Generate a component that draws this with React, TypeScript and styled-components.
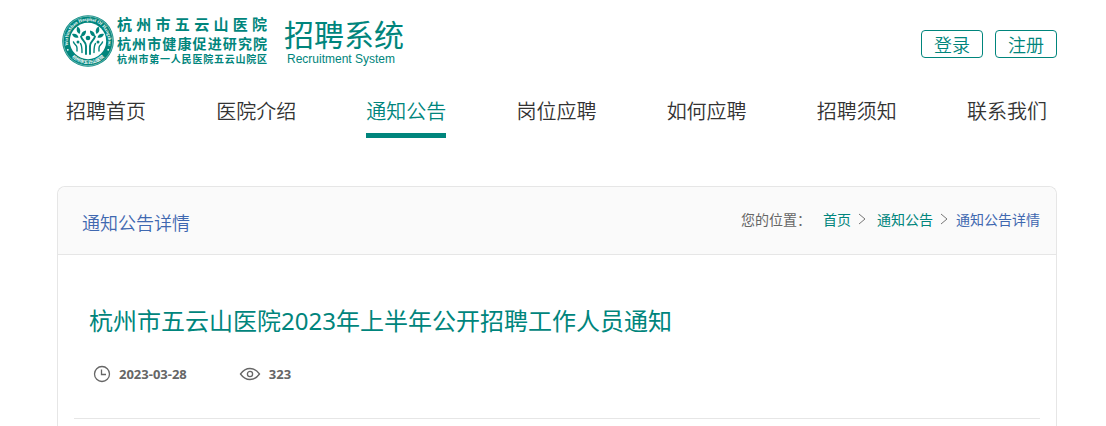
import React from 'react';
import styled, { createGlobalStyle } from 'styled-components';

const teal = '#00857c';
const line = '#e6e6e6';

const GlobalStyle = createGlobalStyle`
  * { box-sizing: border-box; }
  body {
    margin: 0;
    background: #fff;
    color: #333;
    font-family: "Noto Sans CJK SC", sans-serif;
  }
  a { color: inherit; text-decoration: none; }
`;

const Page = styled.div`
  padding: 11px 49px 0 57px;
`;

const Header = styled.header`
  display: flex;
  align-items: center;
  height: 60px;
`;

const Brand = styled.a`
  display: flex;
  align-items: center;
  padding-left: 4px;
  color: ${teal};
`;

const Emblem = styled.svg`
  width: 54px;
  height: 54px;
  margin-right: 2px;
`;

const Names = styled.span`
  display: flex;
  flex-direction: column;
  width: 150px;
  padding-bottom: 2px;
  font-weight: 700;
`;

const Name = styled.span<{ $size: number; $height: number }>`
  font-size: ${(p) => p.$size}px;
  line-height: ${(p) => p.$height}px;
  white-space: nowrap;
  text-align: justify;
  text-align-last: justify;
`;

const System = styled.span`
  display: flex;
  flex-direction: column;
  margin-left: 17px;
`;

const SystemName = styled.span`
  font-size: 30px;
  line-height: 36px;
`;

const SystemLatin = styled.span`
  padding-left: 3px;
  font: 12px/16px "Liberation Sans", Arial, sans-serif;
`;

const Account = styled.div`
  display: flex;
  gap: 12px;
  margin: 6px 0 0 auto;
`;

const AccountButton = styled.button`
  width: 62px;
  height: 28px;
  padding: 0;
  border: 1px solid ${teal};
  border-radius: 4px;
  background: #fff;
  color: ${teal};
  font-family: inherit;
  font-size: 18px;
  font-weight: 350;
  line-height: 26px;
  cursor: pointer;
`;

const Nav = styled.nav`
  display: flex;
  justify-content: space-between;
  padding: 24px 10px 0 9px;
`;

const NavLink = styled.a<{ $active?: boolean }>`
  padding-bottom: 7px;
  border-bottom: 5px solid ${(p) => (p.$active ? teal : 'transparent')};
  color: ${(p) => (p.$active ? teal : '#333')};
  font-size: 20px;
  font-weight: 350;
  line-height: 31px;
`;

const Panel = styled.main`
  margin-top: 48px;
  border: 1px solid ${line};
  border-bottom: 0;
  border-radius: 8px 8px 0 0;
`;

const PanelHead = styled.div`
  display: flex;
  align-items: center;
  justify-content: space-between;
  height: 68px;
  padding: 2px 16px 0 24px;
  border-bottom: 1px solid ${line};
  border-radius: 8px 8px 0 0;
  background: #fafafa;
`;

const PanelTitle = styled.h2`
  margin: 0;
  color: #3f68b0;
  font-size: 18px;
  font-weight: 350;
  line-height: 28px;
`;

const Crumbs = styled.nav`
  display: flex;
  align-items: center;
  padding-bottom: 6px;
  color: #666;
  font-size: 14px;
  font-weight: 400;
  line-height: 20px;
`;

const CrumbLabel = styled.span`
  margin-right: 12px;
`;

const Crumb = styled.a<{ $current?: boolean }>`
  color: ${(p) => (p.$current ? '#3f68b0' : teal)};
`;

const Chevron = styled.svg<{ $wide?: boolean }>`
  width: 8px;
  height: 12px;
  margin: 0 ${(p) => (p.$wide ? 11 : 8)}px 0 7px;
`;

const Article = styled.article`
  padding: 44px 16px 24px;
`;

const ArticleHead = styled.header`
  padding: 0 15px 33px;
  border-bottom: 1px solid ${line};
`;

const Title = styled.h1`
  margin: 0;
  color: ${teal};
  font-family: "Noto Sans", "Noto Sans CJK SC", sans-serif;
  font-size: 24px;
  font-weight: 400;
  line-height: 44px;
`;

const Meta = styled.div`
  display: flex;
  gap: 52px;
  margin-top: 20px;
  padding-left: 4px;
`;

const MetaItem = styled.span`
  display: flex;
  align-items: center;
  gap: 8px;
  color: #666;
  font: 700 13px/22px "Noto Sans", sans-serif;
`;

const nav = ['招聘首页', '医院介绍', '通知公告', '岗位应聘', '如何应聘', '招聘须知', '联系我们'];

const Separator = ({ wide }: { wide?: boolean }) => (
  <Chevron $wide={wide} viewBox="0 0 8 12" fill="none" stroke="#777" aria-hidden="true">
    <path d="M1 1l6 5-6 5" />
  </Chevron>
);

const EmblemMark = () => (
  <Emblem viewBox="0 0 54 54" aria-hidden="true">
    <defs>
      <path id="upper" d="M8.700 35.500A20.200 20.200 0 1 1 45.300 35.500" />
      <path id="lower" d="M6 36A22.800 22.800 0 0 0 48 36" />
    </defs>
    <circle cx="27" cy="27" r="25.800" fill={teal} />
    <circle cx="27" cy="27" r="24.700" fill="none" stroke="#fff" strokeWidth=".4" />
    <circle cx="27" cy="27" r="18.200" fill="#fff" />
    <g fill="#fff" fontWeight="700">
      <text fontFamily="Liberation Serif, serif" fontSize="4.700">
        <textPath href="#upper" startOffset="50%" textAnchor="middle">WuYunShan Hospital Of Hangzhou</textPath>
      </text>
      <text fontFamily="Noto Sans CJK SC, sans-serif" fontSize="4.500">
        <textPath href="#lower" startOffset="50%" textAnchor="middle">杭州市五云山医院</textPath>
      </text>
    </g>
    <g fill="#fff">
      <circle cx="6.800" cy="35.800" r=".9" />
      <circle cx="47.200" cy="35.800" r=".9" />
    </g>
    <g fill={teal}>
      <path d="M18.500 20c-3-1.500-3.500-4.500-2-7.500 3 2 3.500 4.500 2 7.500z" />
      <path d="M35.500 20c3-1.500 3.500-4.500 2-7.500-3 2-3.500 4.500-2 7.500z" />
      <path d="M20 22.500c0-3.500 1.500-5.500 5-6 .3 3.500-1.500 5.700-5 6z" />
      <path d="M34 22.500c0-3.500-1.500-5.500-5-6-.3 3.500 1.500 5.700 5 6z" />
      <path d="M17.500 23.500c-3.500 1-5.500-.5-6.500-3.500 3.500-.8 5.800.5 6.500 3.500z" />
      <path d="M36.500 23.500c3.500 1 5.500-.5 6.500-3.500-3.500-.8-5.800.5-6.500 3.500z" />
      <circle cx="27" cy="24" r="2.300" />
      <circle cx="17" cy="28" r="1.500" />
      <circle cx="37" cy="28" r="1.500" />
    </g>
    <g fill="none" stroke={teal} strokeWidth="1.900" strokeLinecap="round">
      <path d="M20 22.500c1 4 5 5 5 9.500v8M34 22.500c-1 4-5 5-5 9.500v8" />
      <path d="M12.500 28c1 3 3.500 3 3.500 6v3M19.500 29.500c1.500 2 1.500 4 1.500 9M41.500 28c-1 3-3.500 3-3.500 6v3M34.500 29.500c-1.500 2-1.500 4-1.500 9" strokeWidth="1.400" />
    </g>
  </Emblem>
);

export default function App() {
  return (
    <Page lang="zh-CN">
      <GlobalStyle />
      <Header>
        <Brand href="#">
          <EmblemMark />
          <Names>
            <Name $size={15} $height={20}>杭州市五云山医院</Name>
            <Name $size={14} $height={18}>杭州市健康促进研究院</Name>
            <Name $size={10} $height={14}>杭州市第一人民医院五云山院区</Name>
          </Names>
          <System>
            <SystemName>招聘系统</SystemName>
            <SystemLatin>Recruitment System</SystemLatin>
          </System>
        </Brand>
        <Account>
          <AccountButton type="button">登录</AccountButton>
          <AccountButton type="button">注册</AccountButton>
        </Account>
      </Header>
      <Nav>
        {nav.map((label) => (
          <NavLink key={label} href="#" $active={label === '通知公告'}>{label}</NavLink>
        ))}
      </Nav>
      <Panel>
        <PanelHead>
          <PanelTitle>通知公告详情</PanelTitle>
          <Crumbs aria-label="您的位置">
            <CrumbLabel>您的位置：</CrumbLabel>
            <Crumb href="#">首页</Crumb>
            <Separator wide />
            <Crumb href="#">通知公告</Crumb>
            <Separator />
            <Crumb href="#" $current>通知公告详情</Crumb>
          </Crumbs>
        </PanelHead>
        <Article>
          <ArticleHead>
            <Title>杭州市五云山医院2023年上半年公开招聘工作人员通知</Title>
            <Meta>
              <MetaItem>
                <svg width="18" height="18" viewBox="0 0 18 18" fill="none" stroke="#666" strokeWidth="1.300" aria-hidden="true">
                  <circle cx="9" cy="9" r="7.500" />
                  <path d="M8.500 4.500V9.500H13" />
                </svg>
                <time dateTime="2023-03-28">2023-03-28</time>
              </MetaItem>
              <MetaItem>
                <svg width="22" height="14" viewBox="0 0 22 14" fill="none" stroke="#666" strokeWidth="1.300" aria-hidden="true">
                  <path d="M1.500 7C4 3.500 7 1.500 11 1.500S18 3.500 20.500 7C18 10.500 15 12.500 11 12.500S4 10.500 1.500 7z" />
                  <circle cx="11" cy="7" r="2.600" />
                </svg>
                323
              </MetaItem>
            </Meta>
          </ArticleHead>
        </Article>
      </Panel>
    </Page>
  );
}
